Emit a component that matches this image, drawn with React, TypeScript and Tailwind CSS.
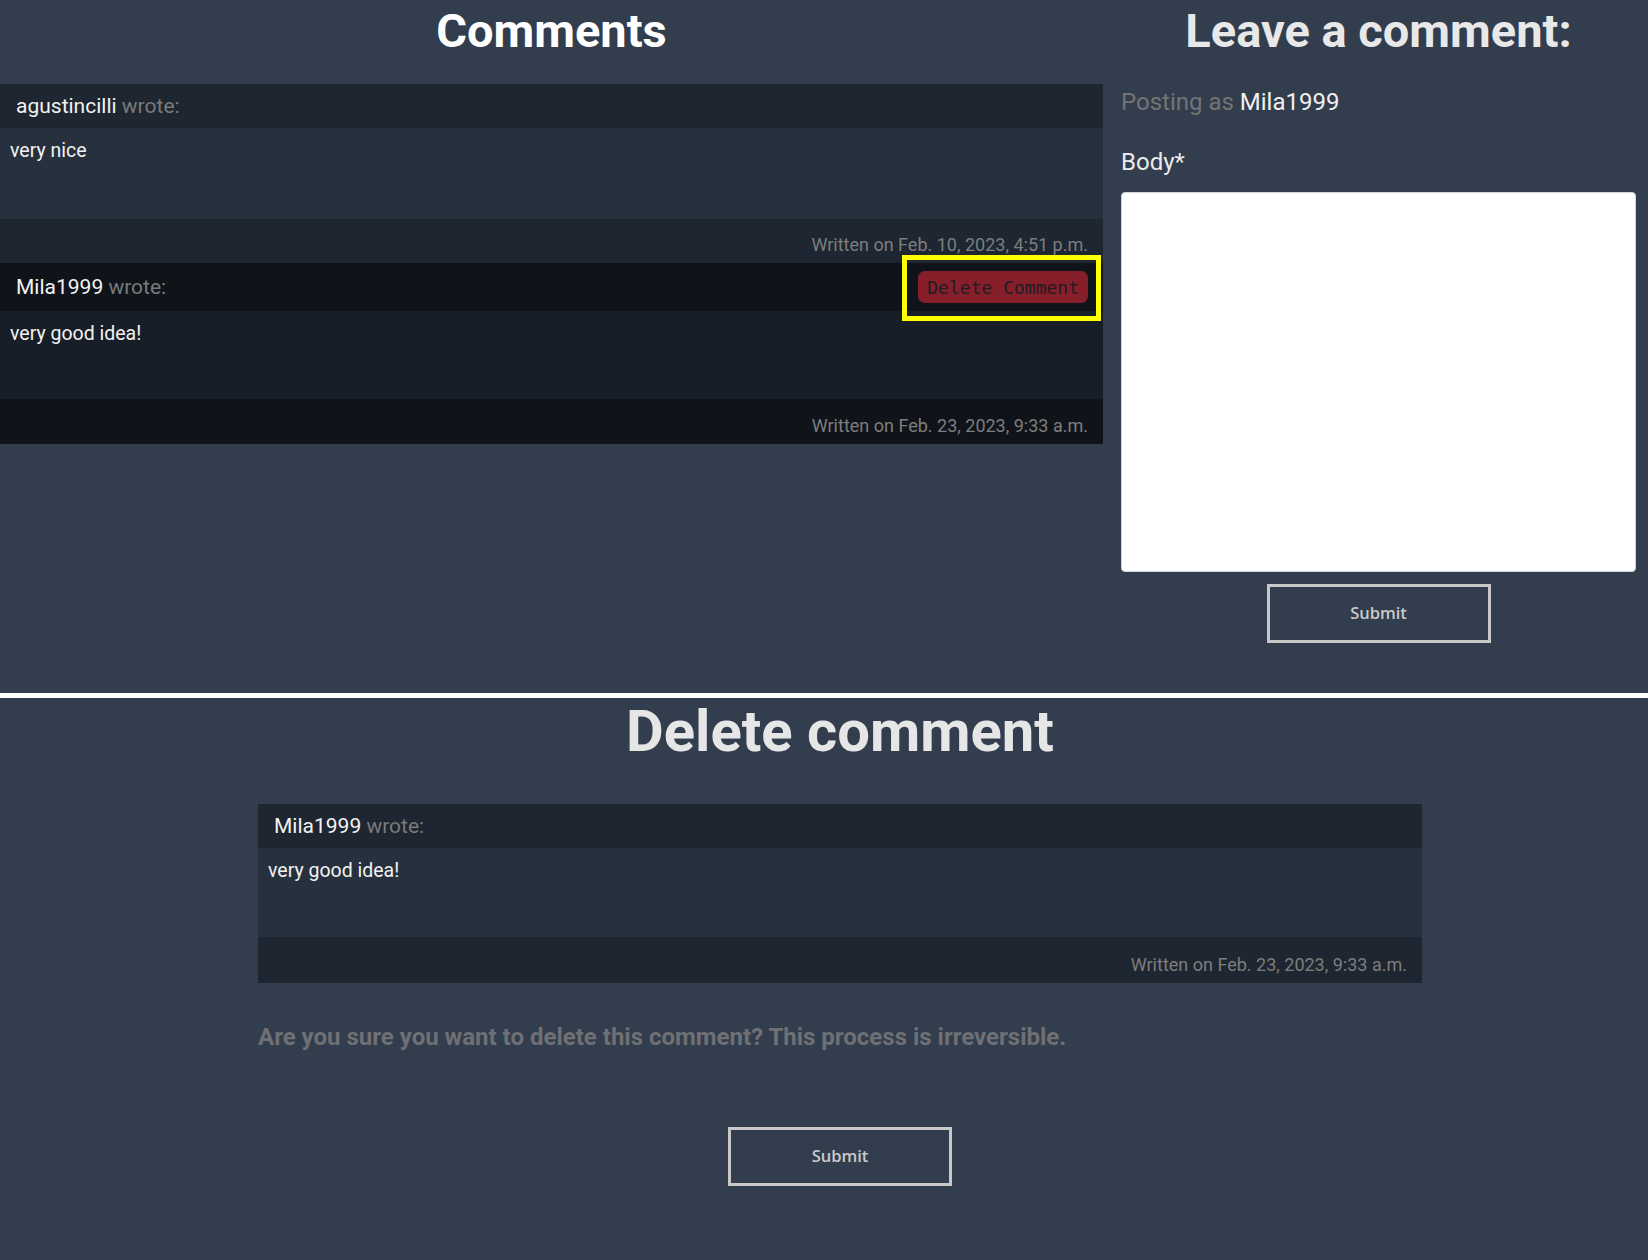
import React from "react";

type Comment = {
  author: string;
  body: string;
  date: string;
  own?: boolean;
};

const comments: Comment[] = [
  { author: "agustincilli", body: "very nice", date: "Feb. 10, 2023, 4:51 p.m." },
  { author: "Mila1999", body: "very good idea!", date: "Feb. 23, 2023, 9:33 a.m.", own: true },
];

function CommentCard({ comment, showDelete }: { comment: Comment; showDelete?: boolean }) {
  const own = comment.own && showDelete;
  return (
    <div className="flex flex-col">
      <div
        className={
          own
            ? "flex h-[48px] items-center justify-between bg-[#10141a] pl-4 pr-[15px]"
            : "flex h-[44px] items-center justify-between bg-[#1e2631] pl-4 pr-[15px]"
        }
      >
        <p className="text-[21px] leading-[30px] text-[#f2f2f2]">
          {comment.author} <span className="text-[#7a7a7a]">wrote:</span>
        </p>
        {own && (
          <div className="relative">
            <button className="h-[32px] rounded-[7px] bg-[#861f2a] px-[9px] font-['DejaVu_Sans_Mono',monospace] text-[18px] text-[#1f1c24]">
              Delete Comment
            </button>
            <div className="absolute -left-[16px] -top-[16px] h-[66px] w-[199px] border-[5px] border-[#ffff00]" />
          </div>
        )}
      </div>
      <div
        className={
          own
            ? "h-[88px] bg-[#181e27] pl-[10px] pt-[8px]"
            : comment.own
              ? "h-[89px] bg-[#27303d] pl-[10px] pt-[8px]"
              : "h-[91px] bg-[#27303d] pl-[10px] pt-[8px]"
        }
      >
        <p className="text-[19.5px] leading-[30px] text-[#f2f2f2]">{comment.body}</p>
      </div>
      <div
        className={
          own
            ? "flex h-[45px] items-end justify-end bg-[#10141a] pb-[5px] pr-[15px]"
            : comment.own
              ? "flex h-[46px] items-end justify-end bg-[#1e2631] pb-[5px] pr-[15px]"
              : "flex h-[44px] items-end justify-end bg-[#1e2631] pb-[5px] pr-[15px]"
        }
      >
        <p className="text-[18px] leading-[27px] text-[#7d7d7d]">Written on {comment.date}</p>
      </div>
    </div>
  );
}

function SubmitButton() {
  return (
    <button className="h-[59px] w-[224px] border-[3px] border-[#c8c8c8] font-['Open_Sans',sans-serif] text-[16.5px] font-semibold text-[#cacaca]">
      Submit
    </button>
  );
}

export default function App() {
  return (
    <div className="min-h-[1260px] w-full bg-[#323d4e] font-['Roboto',sans-serif]">
      <div className="flex h-[693px]">
        <div className="flex w-[1103px] flex-col">
          <div className="h-[84px] pt-[3px] text-center">
            <h1 className="text-[47px] font-bold leading-[55px] text-white">Comments</h1>
          </div>
          {comments.map((c, i) => (
            <CommentCard comment={c} showDelete key={i} />
          ))}
        </div>
        <div className="flex flex-1 flex-col pl-[18px] pr-[12px]">
          <div className="h-[84px] pt-[3px] text-center">
            <h1 className="text-[47px] font-bold leading-[55px] text-[#e8e8e8]">Leave a comment:</h1>
          </div>
          <p className="text-[24px] leading-[36px] text-[#747474]">
            Posting as <span className="text-[#f0f0f0]">Mila1999</span>
          </p>
          <label className="mt-[24px] text-[24px] leading-[36px] text-[#ebebeb]">Body*</label>
          <textarea className="mt-[12px] h-[380px] w-full resize-none rounded-[4px] border border-[#ced4da] bg-white" />
          <div className="mt-[12px] flex justify-center">
            <SubmitButton />
          </div>
        </div>
      </div>
      <div className="h-[5px] bg-white" />
      <div className="flex flex-col pl-[32px]">
        <div className="h-[67px] text-center">
          <h1 className="text-[58px] font-bold leading-[67px] text-[#e6e6e6]">Delete comment</h1>
        </div>
        <div className="mx-auto mt-[39px] w-[1164px]">
          <CommentCard comment={comments[1]} />
          <p className="mt-[37px] text-[24px] font-bold leading-[34px] text-[#6f7074]">
            Are you sure you want to delete this comment? This process is irreversible.
          </p>
          <div className="mt-[73px] flex justify-center">
            <SubmitButton />
          </div>
        </div>
      </div>
    </div>
  );
}
